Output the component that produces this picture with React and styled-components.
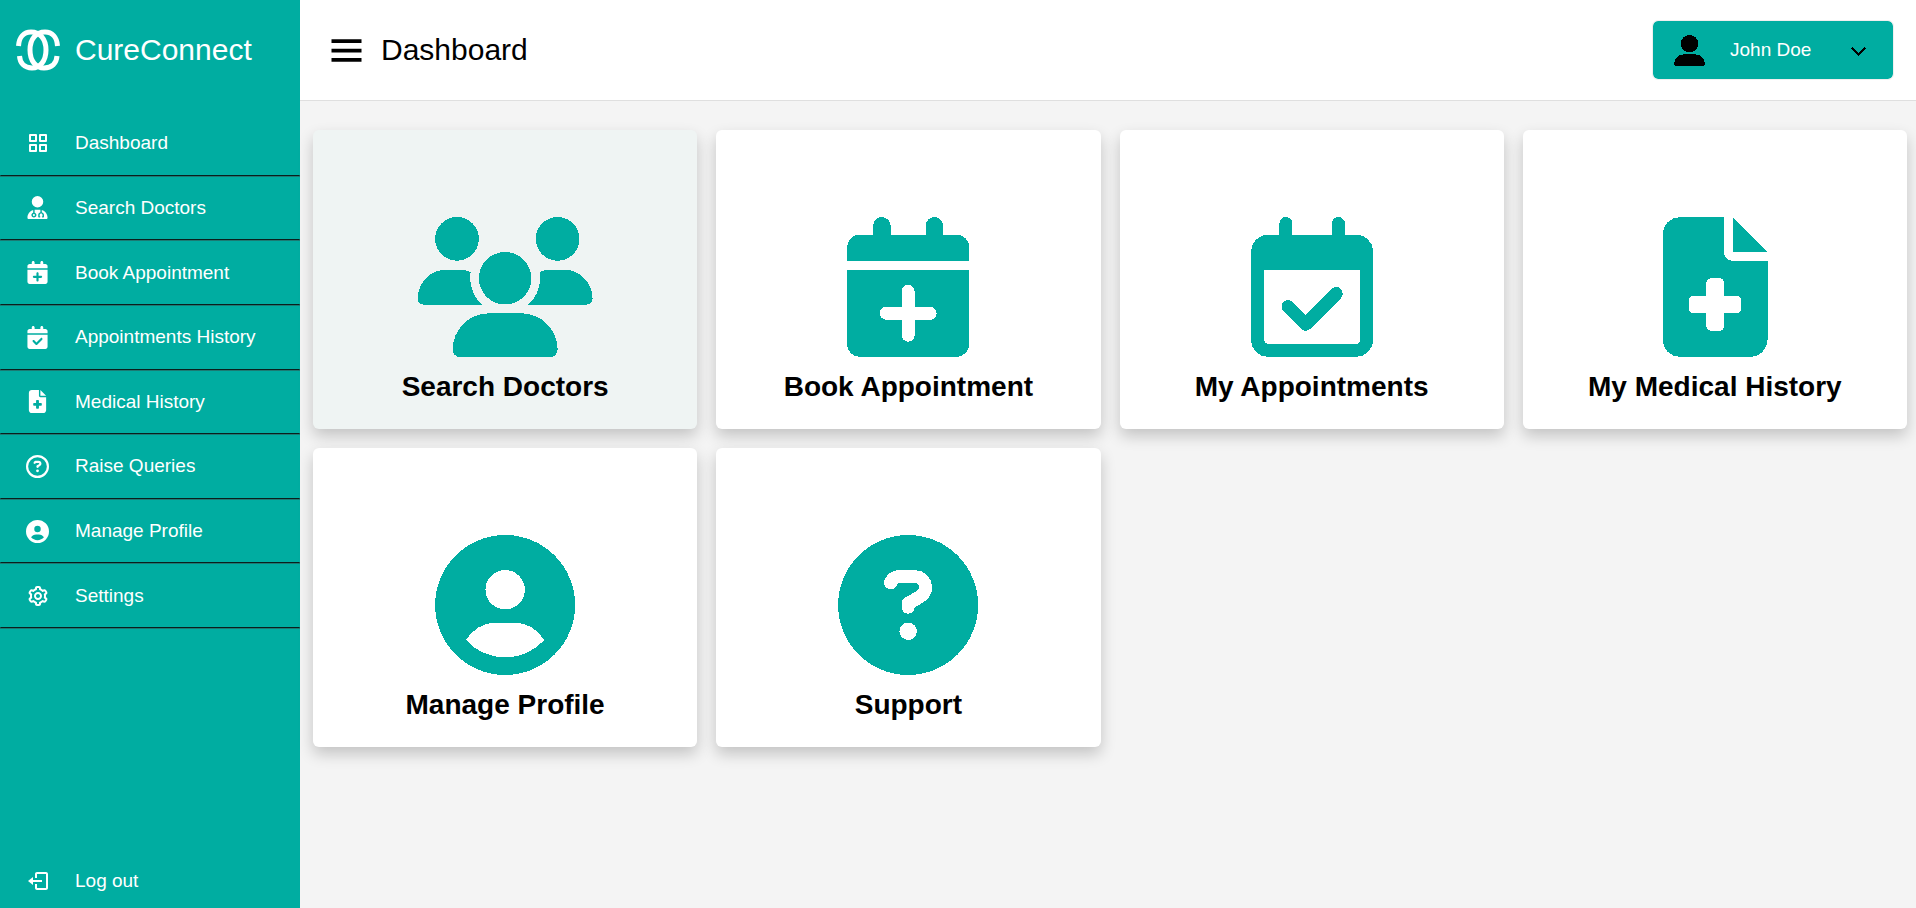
import React from "react";
import styled, { createGlobalStyle } from "styled-components";
import {
  FaUserDoctor, FaCalendarPlus, FaCalendarCheck, FaRegCalendarCheck, FaFileMedical,
  FaRegCircleQuestion, FaCircleQuestion, FaCircleUser, FaUsers, FaUserLarge,
} from "react-icons/fa6";
import { BiGridAlt, BiCog, BiLogOut, BiMenu, BiChevronDown } from "react-icons/bi";

const teal = "#00ada1";

const GlobalStyle = createGlobalStyle`
  *, *::before, *::after { box-sizing: border-box; }
  body {
    margin: 0;
    background: #f4f4f4;
    color: #000;
    font-family: "Liberation Sans", Arial, sans-serif;
  }
  ul { list-style: none; margin: 0; padding: 0; }
  a { color: inherit; text-decoration: none; }
  button { font: inherit; cursor: pointer; }
  svg { display: block; flex: none; }
`;

const Page = styled.div`
  display: flex;
  min-height: 100vh;
`;

const Sidebar = styled.aside`
  flex: none;
  width: 300px;
  display: flex;
  flex-direction: column;
  background: ${teal};
  color: #fff;
`;

const Brand = styled.a`
  height: 100px;
  padding-left: 16px;
  display: flex;
  align-items: center;
  gap: 15px;
  font-size: 30px;
`;

const NavList = styled.ul`
  height: 517px;
  margin-top: 12px;
  display: grid;
  grid-auto-rows: 1fr;
`;

const NavItem = styled.li`
  display: flex;
  flex-direction: column;
`;

const NavLink = styled.a`
  flex: 1;
  display: flex;
  align-items: center;
  font-size: 19px;
  line-height: 22px;
`;

const NavIcon = styled.span`
  width: 75px;
  display: flex;
  justify-content: center;
  font-size: ${(p) => p.$size}px;
`;

const Divider = styled.hr`
  width: 100%;
  margin: 0;
  border-style: solid;
  border-width: 1px;
  border-color: #0a1f1d #1c7a73 #1c7a73 #1c7a73;
`;

const LogOut = styled(NavLink)`
  flex: none;
  height: 54px;
  margin-top: auto;
`;

const Main = styled.div`
  flex: 1;
  min-width: 0;
`;

const TopBar = styled.header`
  height: 101px;
  padding: 0 22px 0 24px;
  display: flex;
  align-items: center;
  justify-content: space-between;
  background: #fff;
  border-bottom: 1px solid #dfdfdf;
`;

const TitleGroup = styled.div`
  display: flex;
  align-items: center;
  gap: 12px;
`;

const MenuButton = styled.button`
  padding: 0;
  border: 0;
  background: none;
  color: #000;
  font-size: 45px;
`;

const Title = styled.h1`
  margin: 0;
  font-size: 30px;
  font-weight: 400;
`;

const ProfileButton = styled.button`
  width: 242px;
  height: 60px;
  padding: 0 19px 0 21px;
  display: flex;
  align-items: center;
  gap: 25px;
  border: 1px solid #efefef;
  border-radius: 6px;
  background: ${teal};
  background-clip: padding-box;
  color: #000;
  font-size: 31px;
  svg { shape-rendering: crispEdges; }
`;

const ProfileName = styled.span`
  margin-right: auto;
  color: #fff;
  font-size: 19px;
`;

const Cards = styled.main`
  padding: 29px 9px 29px 13px;
  display: grid;
  grid-template-columns: repeat(4, minmax(0, 1fr));
  gap: 19px;
`;

const Card = styled.a`
  height: 299px;
  padding-bottom: 25px;
  display: flex;
  flex-direction: column;
  align-items: center;
  justify-content: flex-end;
  gap: 13px;
  border-radius: 6px;
  background: ${(p) => (p.$active ? "#eff4f3" : "#fff")};
  box-shadow: 0 7px 15px rgba(0, 0, 0, 0.2);
  svg {
    width: 100%;
    height: 140px;
    color: ${teal};
    shape-rendering: crispEdges;
  }
`;

const CardTitle = styled.h2`
  margin: 0;
  font-size: 28px;
  line-height: 34px;
  font-weight: 700;
`;

const Logo = () => (
  <svg width="44" height="42" viewBox="0 0 44 42" fill="none" stroke="#fff" strokeWidth="5" aria-hidden="true">
    <path d="M2.500 17C3 8 8 3 15 3c9 0 15 7 15 18s-6 18-14 18C8 39 4 34 3.500 27" />
    <path d="M41.500 17C41 8 36 3 29 3c-9 0-15 7-15 18s6 18 14 18c8 0 12.500-5 13-12" />
  </svg>
);

const navItems = [
  { label: "Dashboard", Icon: BiGridAlt, size: 24 },
  { label: "Search Doctors", Icon: FaUserDoctor, size: 23 },
  { label: "Book Appointment", Icon: FaCalendarPlus, size: 23 },
  { label: "Appointments History", Icon: FaCalendarCheck, size: 23 },
  { label: "Medical History", Icon: FaFileMedical, size: 23 },
  { label: "Raise Queries", Icon: FaRegCircleQuestion, size: 23 },
  { label: "Manage Profile", Icon: FaCircleUser, size: 23 },
  { label: "Settings", Icon: BiCog, size: 24 },
];

const cards = [
  { label: "Search Doctors", Icon: FaUsers, active: true },
  { label: "Book Appointment", Icon: FaCalendarPlus },
  { label: "My Appointments", Icon: FaRegCalendarCheck },
  { label: "My Medical History", Icon: FaFileMedical },
  { label: "Manage Profile", Icon: FaCircleUser },
  { label: "Support", Icon: FaCircleQuestion },
];

export default function App() {
  return (
    <Page>
      <GlobalStyle />
      <Sidebar>
        <Brand href="#"><Logo />CureConnect</Brand>
        <nav>
          <NavList>
            {navItems.map(({ label, Icon, size }) => (
              <NavItem key={label}>
                <NavLink href="#">
                  <NavIcon $size={size}><Icon /></NavIcon>
                  {label}
                </NavLink>
                <Divider />
              </NavItem>
            ))}
          </NavList>
        </nav>
        <LogOut href="#">
          <NavIcon $size={24}><BiLogOut /></NavIcon>
          Log out
        </LogOut>
      </Sidebar>
      <Main>
        <TopBar>
          <TitleGroup>
            <MenuButton type="button" aria-label="Toggle menu"><BiMenu /></MenuButton>
            <Title>Dashboard</Title>
          </TitleGroup>
          <ProfileButton type="button">
            <FaUserLarge />
            <ProfileName>John Doe</ProfileName>
            <BiChevronDown />
          </ProfileButton>
        </TopBar>
        <Cards>
          {cards.map(({ label, Icon, active }) => (
            <Card key={label} href="#" $active={active}>
              <Icon />
              <CardTitle>{label}</CardTitle>
            </Card>
          ))}
        </Cards>
      </Main>
    </Page>
  );
}
